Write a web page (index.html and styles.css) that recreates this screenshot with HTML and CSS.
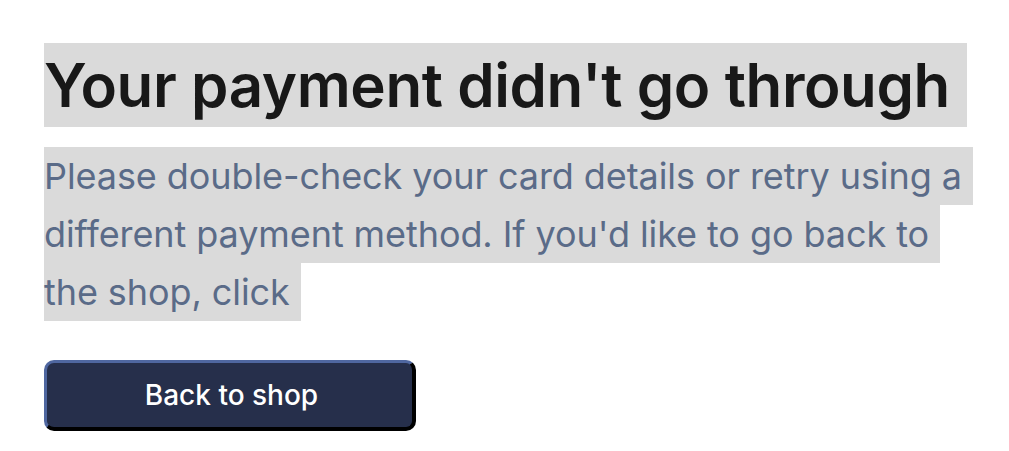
FILE: index.html
```html
<!DOCTYPE html>
<html lang="en">
<head>
<meta charset="utf-8">
<title>Payment failed</title>
<link rel="stylesheet" href="styles.css">
</head>
<body>
<main class="page">
  <h1 class="title"><span class="hl hl-title">Your payment didn't go through</span></h1>
  <p class="text"><span class="hl hl-text">Please double-check your card details or retry using a different payment method. If you'd like to go back to the shop, click</span></p>
  <button class="btn" type="button">Back to shop</button>
</main>
</body>
</html>
```

FILE: styles.css
```css
html, body {
  margin: 0;
  padding: 0;
  background: #ffffff;
}

body {
  font-family: Inter, "Noto Sans", sans-serif;
}

.page {
  padding: 42px 36px 0 44px;
  display: flex;
  flex-direction: column;
  align-items: flex-start;
}

.title {
  margin: 0;
  font-size: 60px;
  font-weight: 600;
  line-height: 86px;
  color: #181818;
  letter-spacing: -0.4px;
}

.hl {
  background: #dadada;
  -webkit-box-decoration-break: clone;
  box-decoration-break: clone;
}

.hl-title {
  padding: 6px 17px 6px 0;
}

.text {
  margin: 0;
  margin-top: 19px;
  width: 940px;
  font-size: 36px;
  font-weight: 400;
  line-height: 58px;
  color: #5a6b88;
  letter-spacing: -0.08px;
}

.hl-text {
  padding: 7px 11px 7px 0;
}

.btn {
  margin-top: 39px;
  width: 372px;
  height: 71px;
  border-style: solid;
  border-width: 3px 4px 4px 3px;
  border-color: #4f67a0 #000000 #000000 #4f67a0;
  border-radius: 10px;
  background: #262f4b;
  color: #ffffff;
  font-family: Inter, "Noto Sans", sans-serif;
  font-size: 28px;
  font-weight: 500;
  padding: 0 0 0 4px;
  cursor: pointer;
}
```
